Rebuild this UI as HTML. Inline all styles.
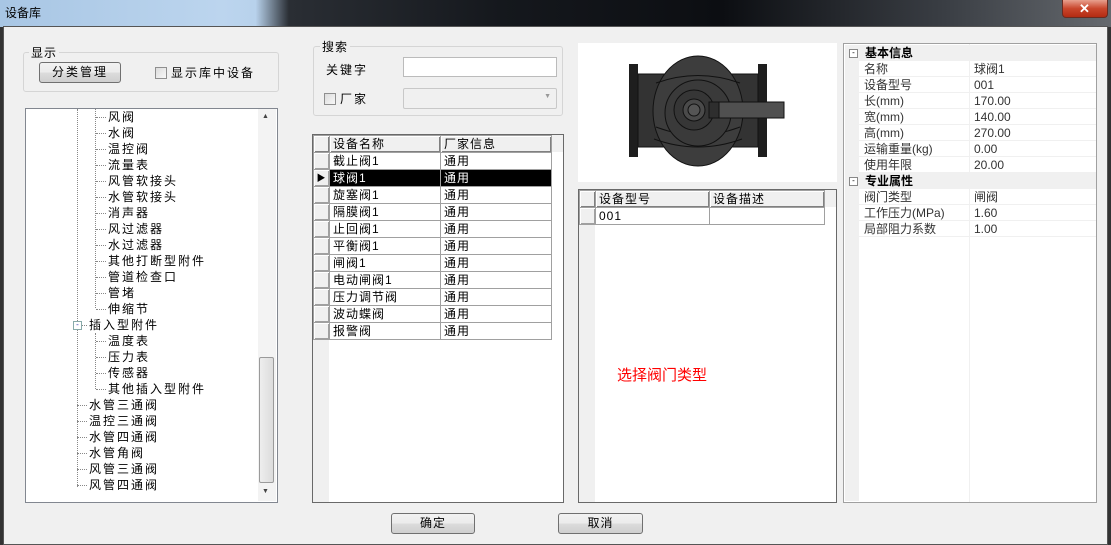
<!DOCTYPE html><html><head><meta charset="utf-8"><style>
*{box-sizing:border-box;margin:0;padding:0}
body{width:1111px;height:545px;overflow:hidden;position:relative;font-family:"Liberation Sans","Noto Sans CJK SC",sans-serif;font-size:12px;color:#000;background:#333;letter-spacing:1px}
.abs{position:absolute}
#title{left:0;top:0;width:1111px;height:27px;background:linear-gradient(90deg,#a8c6e4 0%,#bcd5ee 20%,#b8d2ec 23%,#2a2e34 26%,#15181d 45%,#0c0e12 65%,#3a3e44 85%,#65696e 100%)}
#win{left:3px;top:26px;width:1105px;height:519px;background:#f0f0f0;border:1px solid #555}
.grp{border:1px solid #d5d5d5;border-radius:3px}
.white{background:#fff;border:1px solid #828790}
.btn{border:1px solid #707070;border-radius:3px;background:linear-gradient(#f2f2f2,#ebebeb 50%,#dcdcdc 51%,#cfcfcf);text-align:center;line-height:18px;font-size:12px}
.cb{width:12px;height:12px;border:1px solid #8f8f8f;background:linear-gradient(135deg,#dcdcdc,#f8f8f8)}
.row{position:absolute;height:16px;line-height:16px;white-space:nowrap;letter-spacing:2px}
table{border-collapse:collapse;position:absolute}
td{border:1px solid #a0a0a0;height:17px;line-height:15px;padding:0 3px;font-size:12px;white-space:nowrap}
td.rh{background:#f0f0f0;border:1px solid #a0a0a0;box-shadow:inset 1px 1px #fff,inset -1px -1px #a0a0a0;padding:0}
tr.hd td{background:#f0f0f0;box-shadow:inset 1px 1px #fff,inset -1px -1px #808080}
.pr{position:absolute;left:0;width:251px;height:16px;line-height:16px;border-bottom:1px solid #f0f0f0;letter-spacing:0}
</style></head><body>
<div id="title" class="abs"><span class="abs" style="left:5px;top:4px;font-size:12px;letter-spacing:0">设备库</span>
<div class="abs" style="left:1062px;top:0;width:46px;height:18px;background:linear-gradient(#e8a08e,#c9462c 50%,#b32b12);border:1px solid #6a2b20;border-top:none;border-radius:0 0 4px 4px;color:#fff;text-align:center;font-weight:bold;line-height:17px;font-size:13px">✕</div></div>
<div id="win" class="abs"></div>
<div class="abs grp" style="left:23px;top:52px;width:256px;height:40px"></div>
<div class="abs" style="left:29px;top:44px;background:#f0f0f0;padding:0 2px">显示</div>
<div class="abs btn" style="left:39px;top:62px;width:82px;height:21px;line-height:19px;letter-spacing:2px">分类管理</div>
<div class="abs cb" style="left:155px;top:67px"></div>
<div class="abs" style="left:171px;top:64px;letter-spacing:2px">显示库中设备</div>
<div class="abs white" style="left:25px;top:108px;width:253px;height:395px;border-color:#828790"></div>
<div class="abs" style="left:258px;top:109px;width:18px;height:392px;background:#f3f3f3"></div>
<div class="abs" style="left:259px;top:357px;width:15px;height:126px;border:1px solid #9a9a9a;border-radius:2px;background:linear-gradient(90deg,#eee,#dcdcdc)"></div>
<div class="abs" style="left:262px;top:113px;font-size:7px;color:#444">▲</div>
<div class="abs" style="left:262px;top:488px;font-size:7px;color:#444">▼</div>
<div class="abs" style="left:95px;top:109px;height:199px;border-left:1px dotted #888"></div>
<div class="abs" style="left:77px;top:109px;height:378px;border-left:1px dotted #888"></div>
<div class="abs" style="left:95px;top:333px;height:56px;border-left:1px dotted #888"></div>
<div id="tree"></div>
<div class="abs grp" style="left:313px;top:46px;width:250px;height:70px"></div>
<div class="abs" style="left:320px;top:38px;background:#f0f0f0;padding:0 2px">搜索</div>
<div class="abs" style="left:326px;top:61px;letter-spacing:2px">关键字</div>
<div class="abs" style="left:403px;top:57px;width:154px;height:20px;background:#fff;border:1px solid #bbb"></div>
<div class="abs cb" style="left:324px;top:93px"></div>
<div class="abs" style="left:340px;top:90px;letter-spacing:2px">厂家</div>
<div class="abs" style="left:403px;top:88px;width:154px;height:21px;background:#f0f0f0;border:1px solid #c8c8c8;border-radius:2px"><span class="abs" style="right:4px;top:4px;font-size:7px;color:#999">▼</span></div>
<div class="abs" style="left:312px;top:134px;width:252px;height:369px;background:#fff;border:1px solid #696969"></div>
<div class="abs" style="left:313px;top:135px;width:16px;height:367px;background:#f0f0f0"></div>
<div class="abs" style="left:551px;top:135px;width:12px;height:17px;background:#f0f0f0"></div>
<table id="g1" style="left:313px;top:135px"></table>
<div class="abs" style="left:578px;top:43px;width:259px;height:139px;background:#fff"></div>
<svg class="abs" style="left:578px;top:43px" width="259" height="139">
<rect x="51" y="21" width="9" height="93" fill="#1e1e1e"/><rect x="60" y="31" width="28" height="73" fill="#333" stroke="#111"/>
<rect x="180" y="21" width="9" height="93" fill="#1e1e1e"/><rect x="152" y="31" width="28" height="73" fill="#333" stroke="#111"/>
<ellipse cx="120" cy="68" rx="45" ry="55" fill="#3d3d3d" stroke="#111"/>
<path d="M78 40 Q120 25 162 40 M76 96 Q120 112 164 96 M78 84 Q120 100 162 84" stroke="#111" fill="none"/>
<circle cx="120" cy="70" r="33" fill="#3a3a3a" stroke="#111"/><circle cx="116" cy="67" r="20" fill="#363636" stroke="#111"/>
<circle cx="116" cy="67" r="11" fill="#4a4a4a" stroke="#111"/><circle cx="116" cy="67" r="6" fill="#555" stroke="#111"/>
<rect x="131" y="59" width="10" height="16" fill="#2e2e2e" stroke="#111"/><rect x="141" y="59" width="65" height="16" fill="#505050" stroke="#111"/>
</svg>
<div class="abs" style="left:578px;top:189px;width:259px;height:314px;background:#fff;border:1px solid #696969"></div>
<div class="abs" style="left:579px;top:190px;width:16px;height:312px;background:#f0f0f0"></div>
<div class="abs" style="left:824px;top:190px;width:12px;height:17px;background:#f0f0f0"></div>
<table style="left:579px;top:190px">
<tr class="hd"><td class="rh" style="width:16px"></td><td style="width:114px">设备型号</td><td style="width:115px">设备描述</td></tr>
<tr><td class="rh"></td><td style="background:#fff">001</td><td style="background:#fff"></td></tr></table>
<div class="abs" style="left:617px;top:364px;color:#f00;font-size:15px;letter-spacing:0">选择阀门类型</div>
<div class="abs" style="left:843px;top:43px;width:254px;height:460px;background:#fff;border:1px solid #a0a0a0"><div id="pg" class="abs" style="left:1px;top:1px;width:251px;height:456px"></div>
<div class="abs" style="left:125px;top:0;height:458px;border-left:1px solid #f0f0f0"></div></div>
<div class="abs btn" style="left:391px;top:513px;width:84px;height:21px">确定</div>
<div class="abs btn" style="left:558px;top:513px;width:85px;height:21px">取消</div>
<script>
var t=[["风阀",2],["水阀",2],["温控阀",2],["流量表",2],["风管软接头",2],["水管软接头",2],["消声器",2],["风过滤器",2],["水过滤器",2],["其他打断型附件",2],["管道检查口",2],["管堵",2],["伸缩节",2],["插入型附件",1,1],["温度表",2],["压力表",2],["传感器",2],["其他插入型附件",2],["水管三通阀",1],["温控三通阀",1],["水管四通阀",1],["水管角阀",1],["风管三通阀",1],["风管四通阀",1]],h="";
t.forEach(function(a,i){var y=109+i*16,x=a[1]==2?108:89;
h+='<div class="row" style="left:'+(x-12)+'px;top:'+(y+8)+'px;width:10px;height:0;border-top:1px dotted #888"></div>';
if(a[2])h+='<div class="abs" style="left:73px;top:'+(y+4)+'px;width:9px;height:9px;border:1px solid #8aa;background:#fff;font-size:8px;line-height:6px;text-align:center;color:#33a;letter-spacing:0">-</div>';
h+='<div class="row" style="left:'+x+'px;top:'+y+'px">'+a[0]+'</div>'});
document.getElementById('tree').innerHTML=h;
var g=["截止阀1","球阀1","旋塞阀1","隔膜阀1","止回阀1","平衡阀1","闸阀1","电动闸阀1","压力调节阀","波动蝶阀","报警阀"],s='<tr class="hd"><td class="rh" style="width:16px"></td><td style="width:111px">设备名称</td><td style="width:111px">厂家信息</td></tr>';
g.forEach(function(n,i){var sel=i==1;s+='<tr><td class="rh" style="font-size:9px;text-align:center">'+(sel?'▶':'')+'</td><td style="background:'+(sel?'#000;color:#fff':'#fff')+'">'+n+'</td><td style="background:'+(sel?'#000;color:#fff':'#fff')+'">通用</td></tr>'});
document.getElementById('g1').innerHTML=s;
var p=[["基本信息"],["名称","球阀1"],["设备型号","001"],["长(mm)","170.00"],["宽(mm)","140.00"],["高(mm)","270.00"],["运输重量(kg)","0.00"],["使用年限","20.00"],["专业属性"],["阀门类型","闸阀"],["工作压力(MPa)","1.60"],["局部阻力系数","1.00"]],q="";
p.forEach(function(a,i){var y=i*16;if(a.length==1)q+='<div class="pr" style="top:'+y+'px;background:#f0f0f0;font-weight:bold;padding-left:20px">'+a[0]+'<span class="abs" style="left:4px;top:4px;width:9px;height:9px;border:1px solid #888;background:#fff;font-size:8px;line-height:6px;text-align:center;font-weight:normal">-</span></div>';
else q+='<div class="pr" style="top:'+y+'px;color:#333"><div class="abs" style="left:0;width:14px;height:16px;background:#f0f0f0"></div><span class="abs" style="left:19px">'+a[0]+'</span><span class="abs" style="left:129px">'+a[1]+'</span></div>'});
q+='<div class="abs" style="left:0;top:192px;width:14px;height:264px;background:#f0f0f0"></div>';
document.getElementById('pg').innerHTML=q;
</script>
</body></html>
